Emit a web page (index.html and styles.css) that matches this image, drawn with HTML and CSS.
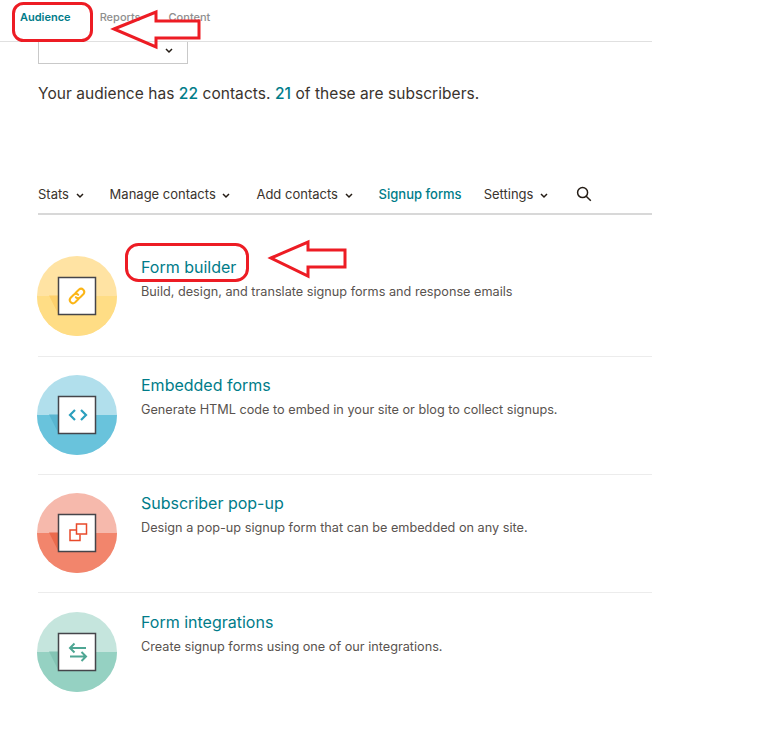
FILE: index.html
```html
<!DOCTYPE html>
<html lang="en">
<head>
  <meta charset="UTF-8" />
  <title>Signup forms</title>
  <link rel="stylesheet" href="styles.css">
</head>
<body>
  <div class="page">
    <nav class="tabs">
      <a class="tab active">Audience</a>
      <a class="tab">Reports</a>
      <a class="tab">Content</a>
    </nav>

    <div class="content">
      <div class="select">
        <svg class="chev" width="8" height="6" viewBox="0 0 8 6"><path d="M1 1l3 3 3-3" /></svg>
      </div>
      <p class="summary">Your audience has <b>22</b> contacts. <b>21</b> of these are subscribers.</p>

      <ul class="menu">
        <li>Stats <svg class="chev" width="8" height="6" viewBox="0 0 8 6"><path d="M1 1l3 3 3-3" /></svg></li>
        <li>Manage contacts <svg class="chev" width="8" height="6" viewBox="0 0 8 6"><path d="M1 1l3 3 3-3" /></svg></li>
        <li>Add contacts <svg class="chev" width="8" height="6" viewBox="0 0 8 6"><path d="M1 1l3 3 3-3" /></svg></li>
        <li class="current">Signup forms</li>
        <li>Settings <svg class="chev" width="8" height="6" viewBox="0 0 8 6"><path d="M1 1l3 3 3-3" /></svg></li>
        <li class="search">
          <svg width="16" height="16" viewBox="0 0 16 16"><circle cx="6.600" cy="6.600" r="5" /><path d="M10.200 10.200l4.600 4.600" /></svg>
        </li>
      </ul>

      <div class="row row-first">
        <svg class="badge" width="80" height="80" viewBox="0 0 80 80">
          <circle cx="40" cy="40" r="40" fill="#ffe3a3" />
          <path d="M0 40a40 40 0 0 0 80 0z" fill="#ffdd85" />
          <path d="M12 39.500h9.500v19z" fill="#fdd06b" />
          <rect x="21.500" y="21.500" width="37" height="37" fill="#fff" stroke="#45454a" stroke-width="1.500" />
          <g fill="none" stroke="#fbb516" stroke-width="2" stroke-linecap="round">
            <path d="M38.500 37l3.500-3.500a3.200 3.200 0 0 1 4.500 4.500l-3.200 3.200a3.200 3.200 0 0 1-4.500 0" />
            <path d="M41.500 43l-3.500 3.500a3.200 3.200 0 0 1-4.500-4.500l3.200-3.200a3.200 3.200 0 0 1 4.500 0" />
          </g>
        </svg>
        <div class="row-text">
          <h3>Form builder</h3>
          <p>Build, design, and translate signup forms and response emails</p>
        </div>
      </div>

      <div class="row">
        <svg class="badge" width="80" height="80" viewBox="0 0 80 80">
          <circle cx="40" cy="40" r="40" fill="#b1dfec" />
          <path d="M0 40a40 40 0 0 0 80 0z" fill="#69c3dc" />
          <path d="M12 39.500h9.500v19z" fill="#58b5d0" />
          <rect x="21.500" y="21.500" width="37" height="37" fill="#fff" stroke="#45454a" stroke-width="1.500" />
          <g fill="none" stroke="#2b9fbd" stroke-width="2.200">
            <path d="M38 35l-5 5 5 5" />
            <path d="M44 35l5 5-5 5" />
          </g>
        </svg>
        <div class="row-text">
          <h3>Embedded forms</h3>
          <p>Generate HTML code to embed in your site or blog to collect signups.</p>
        </div>
      </div>

      <div class="row">
        <svg class="badge" width="80" height="80" viewBox="0 0 80 80">
          <circle cx="40" cy="40" r="40" fill="#f6b9ac" />
          <path d="M0 40a40 40 0 0 0 80 0z" fill="#f2856c" />
          <path d="M12 39.500h9.500v19z" fill="#ea6a4c" />
          <rect x="21.500" y="21.500" width="37" height="37" fill="#fff" stroke="#45454a" stroke-width="1.500" />
          <g fill="none" stroke="#e8492a" stroke-width="1.500">
            <rect x="39.500" y="31" width="10" height="10" />
            <path d="M39 37h-6v10.500h10v-6" />
          </g>
        </svg>
        <div class="row-text">
          <h3>Subscriber pop-up</h3>
          <p>Design a pop-up signup form that can be embedded on any site.</p>
        </div>
      </div>

      <div class="row">
        <svg class="badge" width="80" height="80" viewBox="0 0 80 80">
          <circle cx="40" cy="40" r="40" fill="#c5e5dd" />
          <path d="M0 40a40 40 0 0 0 80 0z" fill="#95d1c2" />
          <path d="M12 39.500h9.500v19z" fill="#84c4b4" />
          <rect x="21.500" y="21.500" width="37" height="37" fill="#fff" stroke="#45454a" stroke-width="1.500" />
          <g fill="none" stroke="#4ea693" stroke-width="2">
            <path d="M33 36h16M37.500 31.500L33 36l4.500 4.500" />
            <path d="M49 44.500H33M44.500 40l4.500 4.500-4.500 4.500" />
          </g>
        </svg>
        <div class="row-text">
          <h3>Form integrations</h3>
          <p>Create signup forms using one of our integrations.</p>
        </div>
      </div>
    </div>
  </div>

  <!-- red markup drawn on top of the screenshot -->
  <svg class="markup" width="768" height="731" viewBox="0 0 768 731">
    <rect x="13.500" y="3.500" width="78" height="37" rx="10" />
    <path d="M114 29L156 12v9h43v17h-43v9z" />
    <rect x="126.500" y="244.500" width="121" height="36" rx="12" />
    <path d="M271 258L308 242v8h37v17h-37v9z" />
  </svg>
</body>
</html>
```

FILE: styles.css
```css
body {
  margin: 0;
  background: #fff;
  color: #241c15;
  font-family: "Inter", "Liberation Sans", sans-serif;
}
.page {
  width: 652px;
}
.tabs {
  display: flex;
  height: 41px;
  padding-left: 20px;
  border-bottom: 1px solid #e0e0e0;
  font-size: 11px;
  font-weight: 500;
  line-height: 35px;
}
.tab {
  color: #8f8f8f;
  margin-right: 28px;
}
.tab.active {
  color: #007c89;
  font-weight: 600;
  margin-right: 29px;
}
.content {
  padding-left: 38px;
}
.select {
  box-sizing: border-box;
  width: 150px;
  height: 22px;
  border: 1px solid #c9c9c9;
  border-top: none;
  display: flex;
  justify-content: flex-end;
  align-items: center;
  padding: 0 14px 4px 0;
}
.chev {
  fill: none;
  stroke: #241c15;
  stroke-width: 1.500;
}
.summary {
  margin: 20px 0 0;
  font-size: 15.500px;
  line-height: 20px;
  letter-spacing: 0.050px;
  color: #3a332d;
}
.summary b {
  color: #007c89;
  font-weight: 500;
}
.menu {
  list-style: none;
  display: flex;
  align-items: center;
  margin: 70px 0 0;
  padding: 0;
  height: 39px;
  border-bottom: 2px solid #d8d8d8;
  font-size: 13px;
  color: #3a332d;
}
.menu li {
  margin-right: 26px;
}
.menu .chev {
  margin-left: 3px;
}
.menu .current {
  color: #007c89;
  font-weight: 500;
  margin-right: 22px;
}
.menu .search {
  display: flex;
  margin-left: 2px;
}
.search svg {
  fill: none;
  stroke: #241c15;
  stroke-width: 1.500;
}
.row {
  display: flex;
  gap: 24px;
  height: 99px;
  padding: 18px 0 0;
  border-bottom: 1px solid #ececec;
}
.row-first {
  height: 100px;
  padding-top: 41px;
}
.row:last-child {
  padding-top: 19px;
  border-bottom: none;
}
.badge {
  flex: none;
  margin-left: -1px;
}
.row-text h3 {
  margin: 0;
  font-size: 16px;
  font-weight: 400;
  line-height: 20px;
  color: #007c89;
}
.row-first .row-text h3 {
  margin-top: 1px;
}
.row-text p {
  margin: 6px 0 0;
  font-size: 12.700px;
  line-height: 18px;
  color: #59534f;
}
.markup {
  position: absolute;
  top: 0;
  left: 0;
  fill: none;
  stroke: #ed1c24;
  stroke-width: 3;
}
```
